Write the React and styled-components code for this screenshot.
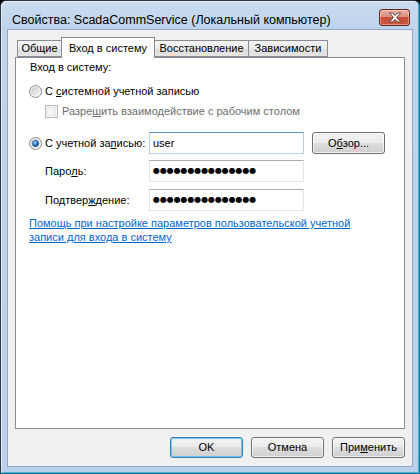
import React from 'react';
import styled, { createGlobalStyle } from 'styled-components';

const UI = `"Liberation Sans", Arial, sans-serif`;

const Global = createGlobalStyle`
  html, body { margin: 0; padding: 0; background: #000; }
  body { width: 420px; height: 474px; overflow: hidden; }
  * { box-sizing: border-box; }
`;

const Window = styled.div`
  width: 420px;
  height: 474px;
  border: 1px solid #2b3947;
  border-right-color: #1f6f8f;
  border-bottom-color: #1f6f8f;
  border-radius: 6px 6px 0 0;
  background: linear-gradient(#cadcf0 0px, #bdd4ec 28px, #b9d1ea 100%);
  box-shadow: inset 1px 1px 0 rgba(255, 255, 255, 0.55), inset -1px -1px 0 #3ab6df;
  display: flex;
  flex-direction: column;
  font-family: ${UI};
  font-size: 11px;
  color: #000;
`;

const TitleBar = styled.div`
  height: 28px;
  display: flex;
  align-items: flex-start;
  padding: 0 9px 0 11px;
`;

const Title = styled.div`
  flex: 1;
  margin-top: 11px;
  font-size: 12.5px;
  line-height: 16px;
  white-space: nowrap;
  color: #000;
`;

const CloseButton = styled.div`
  margin-top: 8px;
  width: 31px;
  height: 17px;
  border: 1px solid #6a2519;
  border-radius: 3px;
  background: linear-gradient(#e8b1a6 0%, #db8d7e 45%, #c84f39 50%, #c8583f 100%);
  box-shadow: inset 0 0 0 1px rgba(255, 220, 210, 0.45);
  display: flex;
  align-items: center;
  justify-content: center;
`;

const Client = styled.div`
  flex: 1;
  margin: 0 6px 6px;
  border: 1px solid #93a9c3;
  background: #f0f0f0;
  padding: 7px 7px 8px;
  display: flex;
  flex-direction: column;
`;

const TabStrip = styled.div`
  height: 20px;
  display: flex;
  align-items: flex-end;
  padding-left: 2px;
`;

const Tab = styled.div`
  position: relative;
  width: ${p => p.$w}px;
  height: ${p => (p.$active ? 21 : 17)}px;
  margin-left: ${p => (p.$first ? 0 : -1)}px;
  margin-bottom: ${p => (p.$active ? -1 : 0)}px;
  border: 1px solid #898c95;
  border-bottom: ${p => (p.$active ? 'none' : '1px solid #898c95')};
  background: ${p => (p.$active ? '#fff' : 'linear-gradient(#f3f3f3, #ebebeb 50%, #dddddd 51%, #e5e5e5)')};
  z-index: ${p => (p.$active ? 2 : 1)};
  display: flex;
  align-items: ${p => (p.$active ? 'flex-start' : 'center')};
  justify-content: center;
  padding-top: ${p => (p.$active ? 4 : 0)}px;
  white-space: nowrap;
  line-height: 13px;
`;

const Panel = styled.div`
  height: 372px;
  border: 1px solid #898c95;
  background: #fff;
  padding-top: 3px;
  display: flex;
  flex-direction: column;
`;

const Heading = styled.div`
  margin-left: 14px;
  height: 13px;
  line-height: 13px;
`;

const OptionRow = styled.div`
  display: flex;
  align-items: center;
  height: 15px;
  margin-top: ${p => p.$mt}px;
  padding-left: ${p => p.$indent}px;
  color: ${p => (p.$disabled ? '#6d6d6d' : '#000')};
  line-height: 13px;
`;

const OptionLabel = styled.span`
  margin-left: ${p => p.$gap}px;
  white-space: nowrap;
`;

const CheckBox = styled.span`
  width: 13px;
  height: 13px;
  border: 1px solid #b9b9b9;
  background: #f4f4f4;
  box-shadow: inset 0 0 0 1px #f4f4f4, inset 0 0 0 2px #e6e6e6;
  flex: none;
`;

const FieldRow = styled.div`
  display: grid;
  grid-template-columns: 112px 155px 73px;
  column-gap: 8px;
  align-items: center;
  height: 22px;
  margin-top: ${p => p.$mt}px;
  padding-left: 13px;
`;

const FieldLabel = styled.div`
  display: flex;
  align-items: center;
  padding-left: ${p => p.$indent}px;
  white-space: nowrap;
  line-height: 13px;
`;

const TextBox = styled.div`
  height: 22px;
  border: 1px solid ${p => (p.$focused ? '#b5cfe7' : '#e2e3ea')};
  border-top-color: ${p => (p.$focused ? '#5d95c4' : '#abadb3')};
  background: #fff;
  display: flex;
  align-items: center;
  padding-left: 3px;
  white-space: nowrap;
`;

const Dots = styled.span`
  font-family: "DejaVu Sans", sans-serif;
  font-size: 8px;
  letter-spacing: -0.1px;
  line-height: 10px;
`;

const Button = styled.div`
  width: 73px;
  height: ${p => p.$h}px;
  border: 1px solid ${p => (p.$default ? '#3c7fb1' : '#707070')};
  border-radius: 3px;
  background: linear-gradient(#f2f2f2 0%, #ebebeb 50%, #dddddd 50%, #cfcfcf 100%);
  box-shadow: inset 0 0 0 1px ${p => (p.$default ? 'rgba(72, 190, 245, 0.75)' : 'rgba(255, 255, 255, 0.7)')};
  display: flex;
  align-items: center;
  justify-content: center;
  line-height: 13px;
  white-space: nowrap;
`;

const HelpLink = styled.a`
  margin: 5px 0 0 13px;
  color: #0066cc;
  text-decoration: underline;
  line-height: 14px;
  cursor: pointer;
`;

const ButtonRow = styled.div`
  margin-top: 8px;
  display: flex;
  justify-content: flex-end;
  gap: 8px;
`;

const U = styled.span`
  text-decoration: underline;
`;

const Radio = ({ checked }) => (
  <svg width="13" height="13" viewBox="0 0 13 13" style={{ flex: 'none' }}>
    <defs>
      <linearGradient id={checked ? 'rgA' : 'rgB'} x1="0" y1="0" x2="1" y2="1">
        <stop offset="0" stopColor="#c9c9c9" />
        <stop offset="1" stopColor="#f8f8f8" />
      </linearGradient>
      <radialGradient id="rdot" cx="0.38" cy="0.35" r="0.75">
        <stop offset="0" stopColor="#a9dcff" />
        <stop offset="0.45" stopColor="#3a86cf" />
        <stop offset="1" stopColor="#123f78" />
      </radialGradient>
    </defs>
    <circle cx="6.5" cy="6.5" r="6" fill="#f3f3f3" stroke="#8a8a8a" />
    <circle cx="6.5" cy="6.5" r="4.6" fill={`url(#${checked ? 'rgA' : 'rgB'})`} />
    {checked && <circle cx="6.5" cy="6.5" r="3.1" fill="url(#rdot)" stroke="#19457e" strokeWidth="0.7" />}
  </svg>
);

const CloseGlyph = () => (
  <svg width="14" height="11" viewBox="0 0 14 11">
    <path
      d="M1.5 1 H4.5 L7 3.6 L9.5 1 H12.5 L8.6 5.5 L12.5 10 H9.5 L7 7.4 L4.5 10 H1.5 L5.4 5.5 Z"
      fill="#fff"
      stroke="#5b3a35"
      strokeWidth="0.9"
      strokeLinejoin="round"
    />
  </svg>
);

const DOTS = '●●●●●●●●●●●●●●●';

export default function App() {
  return (
    <>
      <Global />
      <Window>
        <TitleBar>
          <Title>Свойства: ScadaCommService (Локальный компьютер)</Title>
          <CloseButton>
            <CloseGlyph />
          </CloseButton>
        </TitleBar>
        <Client>
          <TabStrip>
            <Tab $first $w={45}>Общие</Tab>
            <Tab $active $w={94}>Вход в систему</Tab>
            <Tab $w={95}>Восстановление</Tab>
            <Tab $w={80}>Зависимости</Tab>
          </TabStrip>
          <Panel>
            <Heading>Вход в систему:</Heading>
            <OptionRow $mt={10} $indent={13}>
              <Radio />
              <OptionLabel $gap={3}>
                С <U>с</U>истемной учетной записью
              </OptionLabel>
            </OptionRow>
            <OptionRow $mt={5} $indent={29} $disabled>
              <CheckBox />
              <OptionLabel $gap={4}>
                Разре<U>ш</U>ить взаимодействие с рабочим столом
              </OptionLabel>
            </OptionRow>
            <FieldRow $mt={13}>
              <FieldLabel $indent={0}>
                <Radio checked />
                <OptionLabel $gap={3}>
                  С учетной за<U>п</U>исью:
                </OptionLabel>
              </FieldLabel>
              <TextBox $focused>user</TextBox>
              <Button $h={22}>
                О<U>б</U>зор...
              </Button>
            </FieldRow>
            <FieldRow $mt={6}>
              <FieldLabel $indent={16}>
                Паро<U>л</U>ь:
              </FieldLabel>
              <TextBox>
                <Dots>{DOTS}</Dots>
              </TextBox>
            </FieldRow>
            <FieldRow $mt={7}>
              <FieldLabel $indent={16}>
                Подтвер<U>ж</U>дение:
              </FieldLabel>
              <TextBox>
                <Dots>{DOTS}</Dots>
              </TextBox>
            </FieldRow>
            <HelpLink>
              Помощь при настройке параметров пользовательской учетной
              <br />
              записи для входа в систему
            </HelpLink>
          </Panel>
          <ButtonRow>
            <Button $h={21} $default>OK</Button>
            <Button $h={21}>Отмена</Button>
            <Button $h={21}>
              При<U>м</U>енить
            </Button>
          </ButtonRow>
        </Client>
      </Window>
    </>
  );
}
